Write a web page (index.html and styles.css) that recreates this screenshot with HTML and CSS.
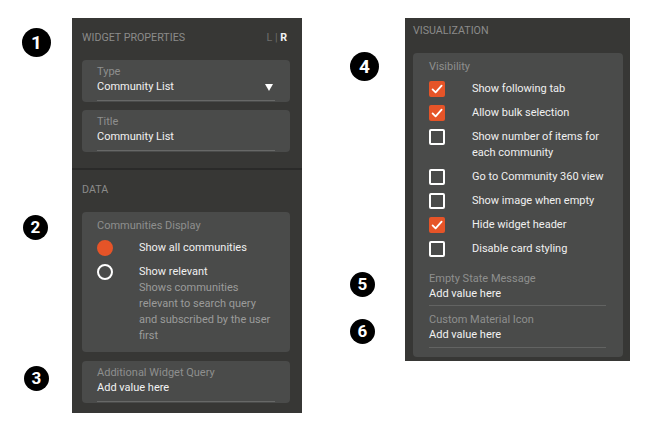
FILE: index.html
```html
<!DOCTYPE html>
<html>
<head>
<meta charset="utf-8">
<title>Widget Properties</title>
<link rel="stylesheet" href="styles.css">
</head>
<body>
<div class="page">

<div class="figure figLeft">
<span class="marker big m1">1</span>
<span class="marker m2">2</span>
<span class="marker m3">3</span>
<div class="panel panelLeft">
<div class="section sectionTop">
<div class="sectionHead">
<span>Widget Properties</span>
<span class="side"><span class="dim">L</span> <span class="dim">|</span> <b>R</b></span>
</div>
<div class="card field">
<div class="label">Type</div>
<div class="value">Community List <span class="arrow"></span></div>
</div>
<div class="card field titleField">
<div class="label">Title</div>
<div class="value">Community List</div>
</div>
</div>
<div class="section sectionData">
<div class="sectionHead"><span>Data</span></div>
<div class="card radios">
<div class="label">Communities Display</div>
<div class="radioRow first"><span class="radio on"></span><span class="txt">Show all communities</span></div>
<div class="radioRow"><span class="radio"></span>
<div class="txt">Show relevant
<div class="desc">Shows communities<br>relevant to search query<br>and subscribed by the user<br>first</div>
</div>
</div>
</div>
<div class="card field queryField">
<div class="label">Additional Widget Query</div>
<div class="value">Add value here</div>
</div>
</div>
</div>
</div>

<div class="figure figRight">
<span class="marker big m4">4</span>
<span class="marker m5">5</span>
<span class="marker m6">6</span>
<div class="panel panelRight">
<div class="sectionHead"><span>Visualization</span></div>
<div class="card vis">
<div class="label">Visibility</div>
<div class="checks">
<div class="checkRow"><span class="box on"><svg viewBox="0 0 16 16" width="16" height="16"><path d="M3.6 8.4 L6.6 11.4 L12.6 4.6" fill="none" stroke="#fff" stroke-width="1.8" stroke-linecap="round" stroke-linejoin="round"/></svg></span><span>Show following tab</span></div>
<div class="checkRow"><span class="box on"><svg viewBox="0 0 16 16" width="16" height="16"><path d="M3.6 8.4 L6.6 11.4 L12.6 4.6" fill="none" stroke="#fff" stroke-width="1.8" stroke-linecap="round" stroke-linejoin="round"/></svg></span><span>Allow bulk selection</span></div>
<div class="checkRow"><span class="box"></span><span>Show number of items for<br>each community</span></div>
<div class="checkRow"><span class="box"></span><span>Go to Community 360 view</span></div>
<div class="checkRow"><span class="box"></span><span>Show image when empty</span></div>
<div class="checkRow"><span class="box on"><svg viewBox="0 0 16 16" width="16" height="16"><path d="M3.6 8.4 L6.6 11.4 L12.6 4.6" fill="none" stroke="#fff" stroke-width="1.8" stroke-linecap="round" stroke-linejoin="round"/></svg></span><span>Hide widget header</span></div>
<div class="checkRow"><span class="box"></span><span>Disable card styling</span></div>
</div>
<div class="inline emptyMsg">
<div class="label">Empty State Message</div>
<div class="value">Add value here</div>
</div>
<div class="inline iconField">
<div class="label">Custom Material Icon</div>
<div class="value">Add value here</div>
</div>
</div>
</div>
</div>

</div>
</body>
</html>
```
FILE: styles.css
```css
html, body { margin: 0; padding: 0; background: #ffffff; }
body { font-family: Roboto, "Noto Sans", Arial, sans-serif; font-size: 11px; color: #ececec; }
.page { display: flex; align-items: flex-start; padding-top: 18px; }

.figure { position: relative; }
.figLeft { padding-left: 72px; }
.figRight { margin-left: 103px; }

/* numbered callouts */
.marker { position: absolute; width: 25px; height: 25px; border-radius: 50%; background: #000; color: #fff; font-weight: 700; font-size: 17px; line-height: 25px; text-align: center; }
.marker.big { width: 29px; height: 29px; line-height: 29px; font-size: 19px; }
.m1 { left: 22px; top: 10px; }
.m2 { left: 23px; top: 197px; }
.m3 { left: 24px; top: 348px; }
.m4 { left: -55px; top: 34px; }
.m5 { left: -55px; top: 254px; }
.m6 { left: -55px; top: 301px; }

.panel { background: #373735; }
.panelLeft { width: 230px; padding-bottom: 10px; }
.panelRight { width: 225px; padding: 0 7px 4px 8px; box-sizing: border-box; }

.sectionHead { display: flex; justify-content: space-between; text-transform: uppercase; font-size: 10.7px; line-height: 12px; color: #8b8b8a; }
.sectionTop .sectionHead, .sectionData .sectionHead { padding: 14px 15px 0 10px; margin-bottom: 16px; }
.panelRight .sectionHead { padding-top: 7px; margin-bottom: 16px; }
.side { text-transform: none; }
.side .dim { color: #6e6e6c; }
.side b { color: #f2f2f2; font-weight: 700; }

.sectionTop { padding-bottom: 16px; border-bottom: 2px solid #2a2a29; }
.section .card { margin-left: 10px; margin-right: 12px; }

.card { background: #4a4b4a; border-radius: 4px; }
.label { color: #8e8f8e; line-height: 14px; }
.value { line-height: 16px; color: #f2f2f2; }

.field { padding: 5px 15px 1px 15px; }
.field .value { padding-bottom: 5px; border-bottom: 1px solid #676867; display: flex; justify-content: space-between; align-items: center; }
.titleField { margin-top: 8px; }
.queryField { margin-top: 9px; }

.arrow { width: 0; height: 0; border-left: 4px solid transparent; border-right: 4px solid transparent; border-top: 7px solid #ffffff; margin-right: 2px; }

.radios { padding: 7px 15px 8px 15px; }
.radioRow { display: flex; align-items: flex-start; margin-top: 8px; line-height: 16px; }
.radioRow.first { margin-top: 7px; }
.radio { width: 12px; height: 12px; border: 2px solid #ffffff; border-radius: 50%; margin-right: 26px; flex: none; }
.radio.on { background: #e65428; border-color: #e65428; }
.radioRow .txt { color: #f0f0f0; }
.desc { color: #9b9b9a; }

.vis { padding: 7px 17px 9px 16px; }
.checks { margin-top: 7px; }
.checkRow { display: flex; align-items: flex-start; line-height: 16px; margin-bottom: 8px; color: #f0f0f0; }
.checkRow:last-child { margin-bottom: 0; }
.box { width: 12px; height: 12px; border: 2px solid #ffffff; border-radius: 2px; margin-right: 27px; flex: none; }
.box.on { background: #e65428; border-color: #e65428; position: relative; }
.box svg { position: absolute; left: -2px; top: -2px; }

.inline .value { border-bottom: 1px solid #626362; }
.emptyMsg { margin-top: 15px; }
.emptyMsg .value { padding-bottom: 3px; }
.iconField { margin-top: 7px; }
.iconField .value { padding-bottom: 4px; }
```
